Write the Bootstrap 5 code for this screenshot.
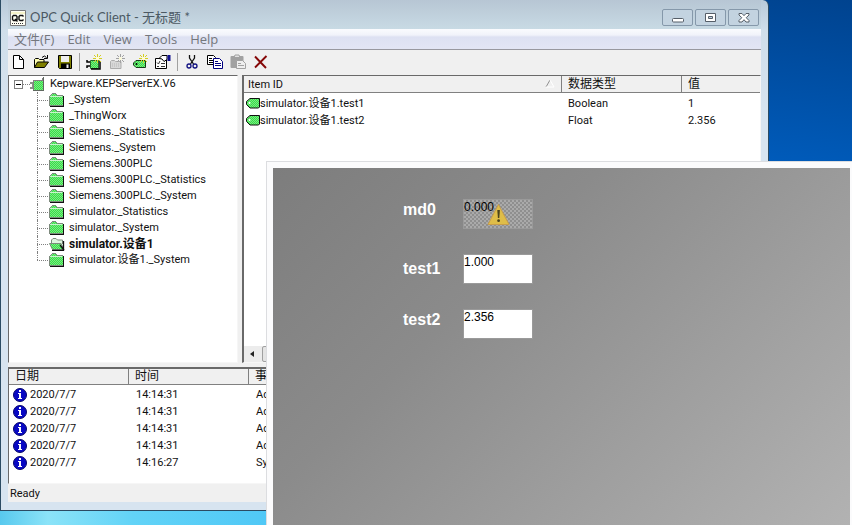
<!DOCTYPE html>
<html lang="zh-CN">
<head>
<meta charset="utf-8">
<meta name="viewport" content="width=device-width, initial-scale=1">
<title>OPC Quick Client</title>
<link href="https://cdn.jsdelivr.net/npm/bootstrap@5.3.0/dist/css/bootstrap.min.css" rel="stylesheet">
<style>
body{font-family:Roboto,"Noto Sans CJK SC",sans-serif;font-size:11px;line-height:16px;color:#111}
.desktop{height:100vh;background:linear-gradient(8deg,#86e4fb 0,#4cc8f2 12%,#0b6cc8 50%,#005cbc 72%,#00438f 100%)}
.streak{left:0;bottom:0;width:266px;height:14px;background:linear-gradient(90deg,#58c9ee,#8be3f8 18%,#62d3f7 50%,#50c8f6)}
.main-win{inset:0 83px 14px 0;border:1px solid #2b4b63;border-top:0;border-radius:0 6px 0 0;background:linear-gradient(#b9cad9,#cfdeea 30px,#d7e4f0 120px);padding:0 7px 8px 7px}
.caption{height:29px;padding:6px 2px 0 2px;background:linear-gradient(#b7c6d4,#c8dae4)}
.caption-text{font:13px/22px Lato,"Noto Sans CJK SC",sans-serif;color:#4c5963}
.win-btns{gap:2px;margin-top:3px}
.win-btn{width:31px;height:17px;padding:0;border:1px solid #8598aa;border-radius:2px;background:#c3d3e0;display:flex;align-items:center;justify-content:center}
.menu-strip{height:21px;padding:0 6px;gap:13px;background:linear-gradient(#fafbfe 0,#f1f3fa 6px,#dde1f2 8px,#e2e5f4 19px);border-bottom:1px solid #98989f}
.menu-strip .btn{font:13px/18px "Open Sans","Noto Sans CJK SC",sans-serif;color:#74777d;padding:0;border:0}
.tool-strip{height:25px;padding:0 3px 2px;background:#f0f0f0;gap:7px}
.tool-strip .btn{padding:0;border:0;width:16px;height:18px;line-height:0}
.tool-sep{width:1px;height:18px;margin:0 -1px;background:#a0a0a0}
.client{background:#f0f0f0}
.pane{background:#fff;border:1px solid #696969;border-right-color:#f6f6f6;border-bottom-color:#f6f6f6;overflow:hidden}
.tree-pane{width:230px}
.item-pane{border-left-width:2px}
.panes{gap:4px}
.tree-list{margin:0;padding:0;list-style:none}
.tree-root{height:16px;padding-left:4px}
.tree-root svg,.tree-node svg,.grid-tbl svg{flex:none;display:block}
.tree-kids{margin-left:28px}
.tree-node{height:16px;position:relative;padding-left:12px;gap:4px}
.tree-node::before{content:"";position:absolute;left:0;top:0;height:100%;border-left:1px dotted #808080}
.tree-node:last-child::before{height:8px}
.tree-node::after{content:"";position:absolute;left:0;top:8px;width:11px;border-top:1px dotted #808080}
.tree-open{font-size:12px}
.grid-tbl{width:100%;table-layout:fixed;border-collapse:separate;border-spacing:0}
.grid-tbl th{font-weight:400;font-size:12px;height:16px;padding:0 6px;background:#f0f0f0;border-right:1px solid #808080;border-bottom:1px solid #808080;white-space:nowrap;overflow:hidden;line-height:15px}
.grid-tbl .latin-head{font-size:11px;padding-left:4px}
.grid-tbl th:last-child{border-right:0}
.grid-tbl td{height:17px;padding:0 6px;white-space:nowrap;overflow:hidden}
.item-pane .grid-tbl th{height:17px}
.grid-tbl td:first-child{padding-left:2px}
.grid-tbl tbody::before{content:"";display:block;height:2px}
.log-pane .grid-tbl tbody::before{height:1px}
.log-pane td:first-child>div{gap:3px;padding-left:2px}
.log-pane td+td{padding-left:7px}
.c-item{width:318px}.c-type{width:120px}.c-date{width:120px}.c-time{width:120px}
.scroll-strip{height:16px;background:#ececec}
.scroll-strip .btn{width:18px;height:16px;padding:0;border:0;line-height:0}
.scroll-thumb{width:160px;border:1px solid #a0a0a0;border-radius:2px;background:#e4e4e4}
.log-pane{height:117px;margin-top:4px;border-top-width:2px}
.status-strip{height:18px;padding:2px;background:#f0f0f0}
.hmi-win{inset:161px 0 0 266px;background:#fbfbfc;border:1px solid #dcdde0;border-width:1px 0 0 1px;padding:6px 2px 0 6px}
.hmi-face{background:linear-gradient(135deg,#7d7d7d 0,#8b8b8b 35%,#9d9d9d 65%,#b2b2b2 100%);padding:31px 0 0 130px}
.hmi-grid{display:grid;grid-template-columns:60px 70px;row-gap:25px}
.hmi-label{font:bold 16px/22px "Liberation Sans",Arial,sans-serif;color:#fff}
.hmi-input{width:100%;height:30px;border:1px solid #9a9a9a;border-radius:0;background:#fff;padding:0 0 14px 0;font:12px/14px "Liberation Sans",Arial,sans-serif;color:#000;display:block}
.hmi-bad{background:repeating-conic-gradient(#8f8f8f 0 25%,#aaa 0 50%) 0 0/4px 4px}
.warn{left:24px;top:4px;line-height:0}
</style>
<script src="https://cdn.jsdelivr.net/npm/bootstrap@5.3.0/dist/js/bootstrap.bundle.min.js"></script>
</head>
<body>
<svg width="0" height="0" class="position-absolute" aria-hidden="true">
<defs>
<pattern id="mesh" width="2" height="2" patternUnits="userSpaceOnUse"><rect width="2" height="2" fill="#38e048"/><path d="M0 0h1v1h-1zM1 1h1v1h-1z" fill="#7be884"/></pattern>
<symbol id="folder" viewBox="0 0 16 14"><g shape-rendering="crispEdges"><path d="M1 3h1V2h1V1h4v1h1v1h6v10H1z" fill="url(#mesh)"/><path d="M0 3h1v10H0zM1 2h1v1H1zM2 1h1v1H2zM3 0h4v1H3zM7 1h1v1H7zM8 2h6v1H8zM0 12h14v1H0z" fill="#7d8a7d"/><path d="M1 3h12v1H1z" fill="#c8f5cc"/><path d="M14 3h1v10h-1zM1 13h14v1H1z" fill="#111"/></g></symbol>
<symbol id="folder-open" viewBox="0 0 16 14"><path d="M2.500 7V3l1.500-1.500h3L8.500 3h5v4" fill="#dff5df" stroke="#7d8a7d"/><path d="M.5 6.500h11.500l3 6H3.500z" fill="url(#mesh)" stroke="#7d8a7d"/><path d="M3 13.500h11.500V4M11 8l4 5" fill="none" stroke="#111" stroke-width="1.300"/></symbol>
<symbol id="tagmark" viewBox="0 0 14 11"><path d="M4 .5h9.500v8.500l-1 1H4L.5 6.500v-3z" fill="url(#mesh)" stroke="#111"/><circle cx="3.500" cy="5" r="1" fill="#fff"/></symbol>
<symbol id="info" viewBox="0 0 14 14"><circle cx="7" cy="7" r="6.500" fill="#0808c4" stroke="#05056a"/><path d="M6 2h2v2H6zM5 5h3v5h1v1H5v-1h1V6H5z" fill="#fff" shape-rendering="crispEdges"/></symbol>
<symbol id="spark" viewBox="0 0 9 9"><path d="M4.500 0v9M0 4.500h9M1 1l7 7M8 1L1 8" stroke="currentColor" stroke-width="1" fill="none"/><path d="M3 3h3v3H3z" fill="#fffbd0"/></symbol>
</defs></svg>

<div class="desktop position-relative overflow-hidden">
<div class="streak position-absolute"></div>
<main class="main-win position-absolute d-flex flex-column">
<header class="caption d-flex align-items-start">
<svg class="mt-1 me-1" width="16" height="16" viewBox="0 0 16 16"><path d="M.5.500h15v15H.5z" fill="#fffff4" stroke="#777"/><path d="M1 3h14" stroke="#eee8a0"/><path d="M6 5.500H3.500L2.500 6.500v3l1 1H6l1-1v-3zM5 9l2.500 2.500M13.500 6.500l-1-1H10L9 6.500v3l1 1h2.500l1-1" fill="none" stroke="#111" stroke-width="1.400"/><path d="M2 13.500h12" stroke="#333" stroke-dasharray="1 1"/></svg>
<span class="caption-text">OPC Quick Client - 无标题 *</span>
<div class="win-btns d-flex ms-auto">
<button class="win-btn" aria-label="Minimize"><svg width="12" height="10"><rect x=".5" y="5.500" width="11" height="3.500" rx="1" fill="#fff" stroke="#555e68"/></svg></button>
<button class="win-btn" aria-label="Maximize"><svg width="11" height="10"><path d="M.5.500h10v8H.5z" fill="#fff" stroke="#555e68"/><path d="M3.500 3.500h4v2h-4z" fill="#c3d3e0" stroke="#555e68"/></svg></button>
<button class="win-btn" aria-label="Close"><svg width="12" height="10"><path d="M1 .5h3l2 2.200L8 .5h3V2L8.200 4.700 11 7.500V9H8L6 6.700 4 9H1V7.500l2.800-2.800L1 2z" fill="#fff" stroke="#555e68"/></svg></button>
</div>
</header>
<nav class="menu-strip d-flex align-items-center" aria-label="Menu">
<button class="btn">文件(F)</button><button class="btn">Edit</button><button class="btn">View</button><button class="btn">Tools</button><button class="btn">Help</button>
</nav>
<div class="tool-strip d-flex align-items-center" role="toolbar" aria-label="Tools">
<button class="btn" aria-label="New"><svg width="16" height="16"><path d="M2.500 1.500h6l4 4v9h-10zM8.500 1.500v4h4" fill="#fff" stroke="#000"/></svg></button>
<button class="btn" aria-label="Open"><svg width="16" height="16"><path d="M.5 13.500v-8l1-1h3l1 1h4.500v2.500" fill="#ffffb0" stroke="#000"/><path d="M.5 13.500l3-5.500h11l-4 5.500z" fill="#808000" stroke="#000"/><path d="M8 3.500q2.500-3 4.500 0M13.500 1v3.500H10" fill="none" stroke="#000"/></svg></button>
<button class="btn" aria-label="Save"><svg width="16" height="16"><path d="M1.500 1.500h13v13h-12l-1-1z" fill="#808000" stroke="#000"/><path d="M4 2h8v6H4z" fill="#eee"/><path d="M4 9.500h9V14H4z"/><path d="M9.500 10.500h2V14h-2z" fill="#eee"/></svg></button>
<span class="tool-sep"></span>
<button class="btn" aria-label="New server"><svg width="16" height="16"><path d="M4.500 6.500h8v8h-8z" fill="url(#mesh)" stroke="#246b2b"/><path d="M5 15h9V7M1 6v2h3M1 14v-2h3" fill="none" stroke="#000" stroke-width="1.500"/><use href="#spark" x="7" y="0" width="9" height="9" color="#d4cf20"/></svg></button>
<button class="btn" aria-label="New group" disabled><svg width="16" height="16"><path d="M1.500 14.500v-7l1-1h3l1 1h5.500v7z" fill="#ccc" stroke="#888"/><path d="M3 10h8M3 12h8" stroke="#999" stroke-dasharray="1 1"/><use href="#spark" x="7" y="0" width="9" height="9" color="#777"/></svg></button>
<button class="btn" aria-label="New item"><svg width="16" height="16"><path d="M4 6.500h9.500v7H4L1.500 11V9z" fill="url(#mesh)" stroke="#153c18"/><circle cx="4.500" cy="10" r="1"/><use href="#spark" x="7" y="0" width="9" height="9" color="#d4cf20"/></svg></button>
<button class="btn" aria-label="Properties"><svg width="16" height="16"><path d="M.5 4.500h11v10H.5z" fill="#fff" stroke="#000"/><path d="M2 8.500l1.500 1.500L5 7M6 9.500h4M2 12.500h2M6 12.500h4" fill="none" stroke="#333"/><path d="M4 4.500l3-3h5v4L9 7.500 7 5z" fill="#fff" stroke="#000"/><path d="M12.500 1h3v6h-3z" fill="#101090"/></svg></button>
<span class="tool-sep"></span>
<button class="btn" aria-label="Cut"><svg width="16" height="16"><path d="M5.500 1v3l4 6M10.500 1v3l-4 6" fill="none" stroke="#111" stroke-width="1.300"/><circle cx="5" cy="12" r="2" fill="none" stroke="#101080" stroke-width="1.300"/><circle cx="11" cy="12" r="2" fill="none" stroke="#101080" stroke-width="1.300"/></svg></button>
<button class="btn" aria-label="Copy"><svg width="16" height="16"><path d="M.5 1.500h6l2 2v7h-8z" fill="#fff" stroke="#000"/><path d="M2 4.500h3M2 6.500h4M2 8.500h4" stroke="#000"/><path d="M6.500 4.500h6l3 3v7h-9z" fill="#fff" stroke="#000080"/><path d="M8 7.500h3M8 9.500h6M8 11.500h6" stroke="#000080"/></svg></button>
<button class="btn" aria-label="Paste" disabled><svg width="16" height="16"><rect x=".5" y="2" width="13" height="12" rx="1" fill="#777"/><path d="M4 3.500l1-2.500h4l1 2.500z" fill="#ddd" stroke="#777"/><path d="M6.500 6.500h6l3 3v5h-9z" fill="#eee" stroke="#777"/><path d="M8 9.500h3M8 11.500h6" stroke="#777"/></svg></button>
<button class="btn" aria-label="Delete"><svg width="16" height="16"><path d="M2 2.500l11 11.500M13.500 2L2 13.500" stroke="#850808" stroke-width="1.900"/></svg></button>
</div>
<div class="client flex-grow-1 d-flex flex-column overflow-hidden">
<div class="panes d-flex flex-grow-1 overflow-hidden">
<section class="pane tree-pane flex-shrink-0">
<div class="tree-root d-flex align-items-center"><svg width="33" height="16" class="me-1" shape-rendering="crispEdges"><path d="M1.500 4.500h8v8h-8z" fill="#fff" stroke="#808080"/><path d="M3 8.500h5" stroke="#000"/><path d="M10 8.500h7" stroke="#808080" stroke-dasharray="1 1"/><path d="M17 6h3v2h3v2h-3v3h-3v-2h2v-3h-2z" fill="#889088"/><path d="M21 5h9v9h-9z" fill="url(#mesh)"/><path d="M20.500 14V4.500H29M29 2v3" fill="none" stroke="#808080"/><path d="M30.500 1v13.500H20" fill="none" stroke="#606860"/></svg><span>Kepware.KEPServerEX.V6</span></div>
<ul class="tree-list tree-kids">
<li class="tree-node d-flex align-items-center"><svg width="16" height="14"><use href="#folder"/></svg>_System</li>
<li class="tree-node d-flex align-items-center"><svg width="16" height="14"><use href="#folder"/></svg>_ThingWorx</li>
<li class="tree-node d-flex align-items-center"><svg width="16" height="14"><use href="#folder"/></svg>Siemens._Statistics</li>
<li class="tree-node d-flex align-items-center"><svg width="16" height="14"><use href="#folder"/></svg>Siemens._System</li>
<li class="tree-node d-flex align-items-center"><svg width="16" height="14"><use href="#folder"/></svg>Siemens.300PLC</li>
<li class="tree-node d-flex align-items-center"><svg width="16" height="14"><use href="#folder"/></svg>Siemens.300PLC._Statistics</li>
<li class="tree-node d-flex align-items-center"><svg width="16" height="14"><use href="#folder"/></svg>Siemens.300PLC._System</li>
<li class="tree-node d-flex align-items-center"><svg width="16" height="14"><use href="#folder"/></svg>simulator._Statistics</li>
<li class="tree-node d-flex align-items-center"><svg width="16" height="14"><use href="#folder"/></svg>simulator._System</li>
<li class="tree-node tree-open d-flex align-items-center fw-bold"><svg width="16" height="14"><use href="#folder-open"/></svg>simulator.设备1</li>
<li class="tree-node d-flex align-items-center"><svg width="16" height="14"><use href="#folder"/></svg>simulator.设备1._System</li>
</ul>
</section>
<section class="pane item-pane flex-grow-1 d-flex flex-column">
<table class="grid-tbl">
<colgroup><col class="c-item"><col class="c-type"><col></colgroup>
<thead><tr><th scope="col" class="latin-head"><div class="d-flex align-items-center justify-content-between">Item ID<svg width="14" height="8"><path d="M5 7l4-7" stroke="#909090"/><path d="M9 0l4 7H5" fill="none" stroke="#fff"/></svg></div></th><th scope="col">数据类型</th><th scope="col">值</th></tr></thead>
<tbody>
<tr><td><div class="d-flex align-items-center"><svg width="14" height="11"><use href="#tagmark"/></svg>simulator.设备1.test1</div></td><td>Boolean</td><td>1</td></tr>
<tr><td><div class="d-flex align-items-center"><svg width="14" height="11"><use href="#tagmark"/></svg>simulator.设备1.test2</div></td><td>Float</td><td>2.356</td></tr>
</tbody>
</table>
<div class="scroll-strip d-flex mt-auto"><button class="btn" aria-label="Scroll left"><svg width="6" height="8"><path d="M4 1v6L0 4z" fill="#222"/></svg></button><span class="scroll-thumb"></span></div>
</section>
</div>
<section class="pane log-pane flex-shrink-0">
<table class="grid-tbl">
<colgroup><col class="c-date"><col class="c-time"><col></colgroup>
<thead><tr><th scope="col">日期</th><th scope="col">时间</th><th scope="col">事</th></tr></thead>
<tbody>
<tr><td><div class="d-flex align-items-center"><svg width="14" height="14"><use href="#info"/></svg>2020/7/7</div></td><td>14:14:31</td><td>Ad</td></tr>
<tr><td><div class="d-flex align-items-center"><svg width="14" height="14"><use href="#info"/></svg>2020/7/7</div></td><td>14:14:31</td><td>Ad</td></tr>
<tr><td><div class="d-flex align-items-center"><svg width="14" height="14"><use href="#info"/></svg>2020/7/7</div></td><td>14:14:31</td><td>Ad</td></tr>
<tr><td><div class="d-flex align-items-center"><svg width="14" height="14"><use href="#info"/></svg>2020/7/7</div></td><td>14:14:31</td><td>Ad</td></tr>
<tr><td><div class="d-flex align-items-center"><svg width="14" height="14"><use href="#info"/></svg>2020/7/7</div></td><td>14:16:27</td><td>Sy</td></tr>
</tbody>
</table>
</section>
<footer class="status-strip">Ready</footer>
</div>
</main>
<section class="hmi-win position-absolute d-flex">
<div class="hmi-face flex-grow-1">
<div class="hmi-grid">
<label class="hmi-label align-self-start" for="md0">md0</label>
<div class="position-relative"><input class="hmi-input hmi-bad" id="md0" value="0.000"><span class="warn position-absolute"><svg width="23" height="23"><path d="M11.500 1.500L22 21.500H1z" fill="#dfbd48" stroke="#c79d4c" stroke-linejoin="round"/><path d="M10.300 7h2.600l-.6 8h-1.400z" fill="#4a431c"/><circle cx="11.600" cy="17.700" r="1.400" fill="#4a431c"/></svg></span></div>
<label class="hmi-label align-self-center" for="test1">test1</label>
<input class="hmi-input" id="test1" value="1.000">
<label class="hmi-label align-self-start" for="test2">test2</label>
<input class="hmi-input" id="test2" value="2.356">
</div>
</div>
</section>
</div>
</body>
</html>
